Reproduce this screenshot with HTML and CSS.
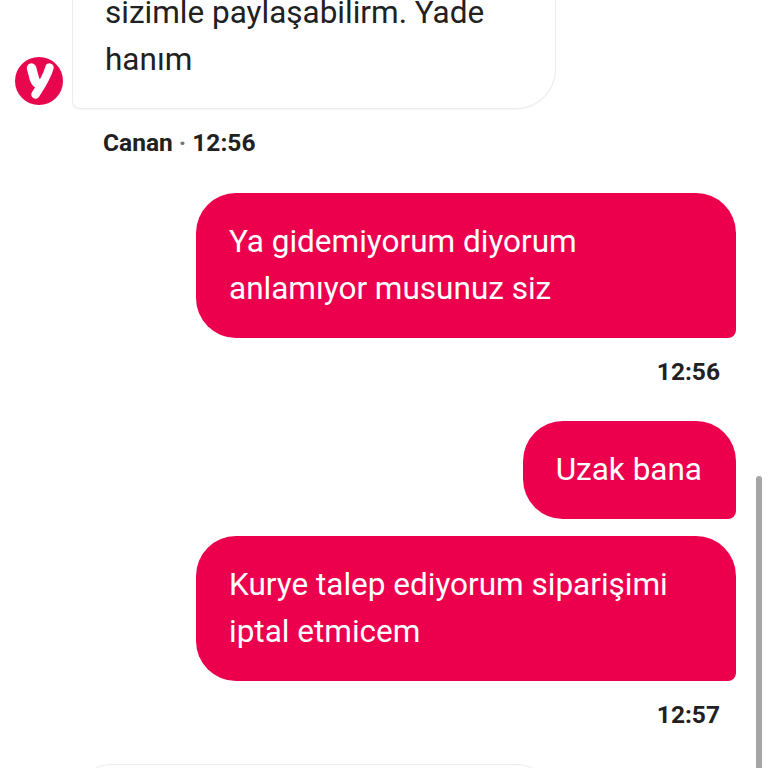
FILE: index.html
```html
<!DOCTYPE html>
<html lang="tr">
<head>
    <meta charset="UTF-8">
    <meta name="viewport" content="width=device-width, initial-scale=1.0">
    <title>Canlı Destek</title>
    <link rel="stylesheet" href="styles.css">
</head>
<body>
    <div class="chat">
        <div class="row-in">
            <svg class="avatar" viewBox="0 0 48 48" aria-hidden="true">
                <circle cx="24" cy="24" r="24" fill="#e8064f"/>
                <path d="M16.500 11 L19.500 22 C20.500 25 22.500 27 25 27.500" fill="none" stroke="#fff" stroke-width="9.500" stroke-linecap="round"/>
                <path d="M34.500 10.500 C32 20 25.500 30 20.500 37.500" fill="none" stroke="#fff" stroke-width="8.500" stroke-linecap="round"/>
            </svg>
            <div class="bubble-in">sizimle paylaşabilirm. Yade hanım</div>
        </div>
        <div class="meta-in">Canan <span class="dot">·</span> 12:56</div>

        <div class="bubble-out">Ya gidemiyorum diyorum anlamıyor musunuz siz</div>
        <div class="meta-out">12:56</div>

        <div class="bubble-out">Uzak bana</div>
        <div class="bubble-out next">Kurye talep ediyorum siparişimi iptal etmicem</div>
        <div class="meta-out">12:57</div>

        <div class="bubble-in last"></div>
    </div>
    <div class="scrollbar"></div>
</body>
</html>
```

FILE: styles.css
```css
html, body {
    margin: 0;
    padding: 0;
    height: 100%;
    overflow: hidden;
    background-color: #fff;
}
body {
    position: relative;
    font-family: Roboto, "Liberation Sans", sans-serif;
}
.chat {
    display: flex;
    flex-direction: column;
    margin-top: -38px;
    padding: 0 32px 0 15px;
}
.row-in {
    display: flex;
    align-items: flex-end;
    gap: 9px;
}
.avatar {
    width: 48px;
    height: 48px;
    margin-bottom: 4px;
    flex-shrink: 0;
}
.bubble-in {
    box-sizing: border-box;
    width: 484px;
    padding: 26px 33px 25px 32px;
    background-color: #fff;
    border: 1px solid #ececec;
    border-radius: 8px 40px 40px 8px;
    box-shadow: 0 1px 1px rgba(0, 0, 0, 0.04);
    color: #212121;
    font-size: 31.5px;
    line-height: 47px;
}
.meta-in {
    margin: 19px 0 0 88px;
    color: #212121;
    font-size: 24.5px;
    font-weight: 700;
    line-height: 30px;
}
.dot {
    color: #757575;
}
.bubble-out {
    box-sizing: border-box;
    align-self: flex-end;
    max-width: 540px;
    margin-top: 34px;
    padding: 25px 34px 26px 33px;
    background-color: #ec004e;
    border-radius: 40px 40px 8px 40px;
    color: #fff;
    font-size: 31.5px;
    line-height: 47px;
}
.meta-in + .bubble-out {
    margin-top: 35px;
}
.bubble-out.next {
    margin-top: 17px;
    width: 540px;
}
.meta-out {
    align-self: flex-end;
    margin: 19px 16px 0 0;
    color: #212121;
    font-size: 24.5px;
    font-weight: 700;
    line-height: 30px;
}
.bubble-in.last {
    margin: 34px 0 0 57px;
    height: 120px;
    border-radius: 40px;
}
.scrollbar {
    position: absolute;
    top: 476px;
    right: 6px;
    bottom: 0;
    width: 6px;
    background-color: #a6a6a6;
    border-radius: 3px 3px 0 0;
}
```
